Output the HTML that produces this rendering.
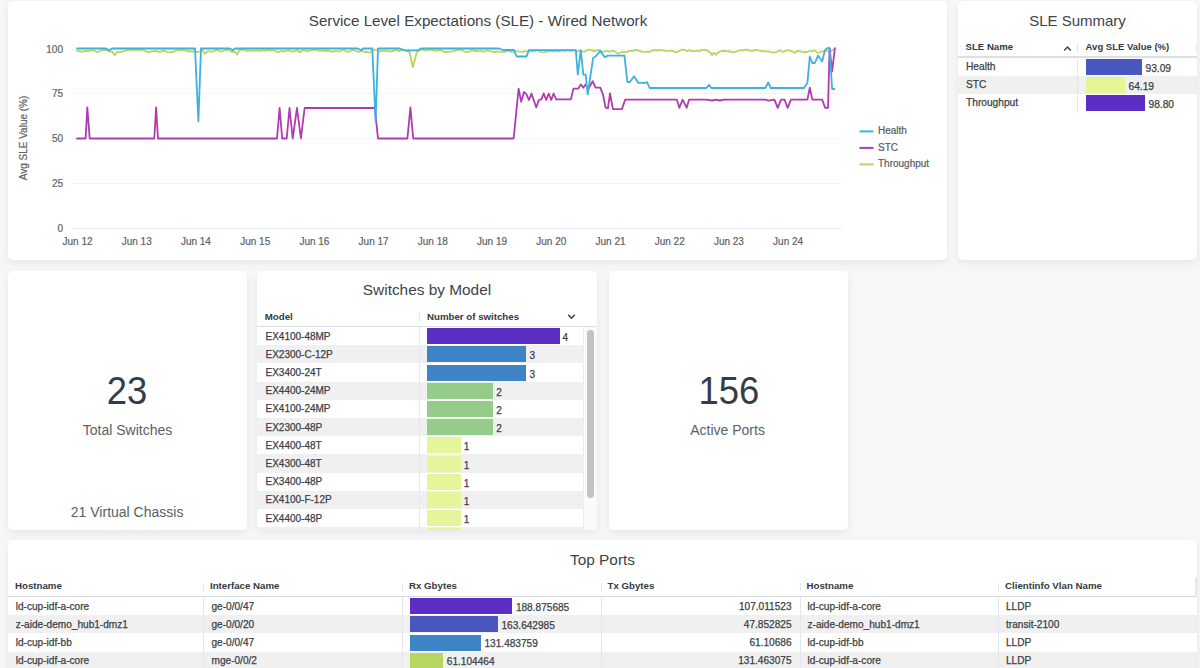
<!DOCTYPE html>
<html><head><meta charset="utf-8"><title>Dashboard</title>
<style>
html,body{margin:0;padding:0;}
body{width:1200px;height:668px;overflow:hidden;background:#f6f7f9;position:relative;font-family:'Liberation Sans', sans-serif;}
.card{position:absolute;background:#fff;border-radius:5px;box-shadow:0 3px 9px rgba(0,0,0,0.07);}
.t{position:absolute;white-space:nowrap;-webkit-text-stroke:0.25px currentColor;}
.r{position:absolute;}
.ic{position:absolute;}
.clip{position:absolute;overflow:hidden;}
.chart{position:absolute;left:0;top:0;}
.ax{font-family:'Liberation Sans', sans-serif;font-size:10px;fill:#5e6268;stroke:#5e6268;stroke-width:0.2px;}
.lg{font-family:'Liberation Sans', sans-serif;font-size:10px;fill:#555b62;stroke:#555b62;stroke-width:0.2px;}
</style></head>
<body>
<div class="card" style="left:8px;top:1px;width:939px;height:259px"></div>
<div class="card" style="left:958px;top:1px;width:239px;height:259px"></div>
<div class="card" style="left:8px;top:271px;width:238.5px;height:259px"></div>
<div class="card" style="left:257px;top:271px;width:340px;height:259px"></div>
<div class="card" style="left:609px;top:271px;width:238.5px;height:259px"></div>
<div class="card" style="left:8px;top:539.5px;width:1189px;height:160.5px"></div>
<div class="t" style="left:178.00px;width:600px;text-align:center;top:12.83px;font-size:15.2px;line-height:15.2px;color:#3d434a;font-weight:400;-webkit-text-stroke:0;">Service Level Expectations (SLE) - Wired Network</div>
<svg class="chart" width="1200" height="268" viewBox="0 0 1200 268">
<line x1="70" y1="49" x2="842" y2="49" stroke="#e9e9eb" stroke-width="1" stroke-dasharray="1,1" shape-rendering="crispEdges"/>
<line x1="70" y1="93.75" x2="842" y2="93.75" stroke="#e9e9eb" stroke-width="1" stroke-dasharray="1,1" shape-rendering="crispEdges"/>
<line x1="70" y1="138.5" x2="842" y2="138.5" stroke="#e9e9eb" stroke-width="1" stroke-dasharray="1,1" shape-rendering="crispEdges"/>
<line x1="70" y1="183.25" x2="842" y2="183.25" stroke="#e9e9eb" stroke-width="1" stroke-dasharray="1,1" shape-rendering="crispEdges"/>
<line x1="70" y1="228" x2="842" y2="228" stroke="#dfe5ef" stroke-width="1" stroke-dasharray="1,1" shape-rendering="crispEdges"/>
<text x="63" y="52.6" text-anchor="end" class="ax">100</text>
<text x="63" y="97.3" text-anchor="end" class="ax">75</text>
<text x="63" y="142.1" text-anchor="end" class="ax">50</text>
<text x="63" y="186.8" text-anchor="end" class="ax">25</text>
<text x="63" y="231.6" text-anchor="end" class="ax">0</text>
<text x="77.5" y="244.7" text-anchor="middle" class="ax">Jun 12</text>
<text x="136.7" y="244.7" text-anchor="middle" class="ax">Jun 13</text>
<text x="195.9" y="244.7" text-anchor="middle" class="ax">Jun 14</text>
<text x="255.2" y="244.7" text-anchor="middle" class="ax">Jun 15</text>
<text x="314.4" y="244.7" text-anchor="middle" class="ax">Jun 16</text>
<text x="373.6" y="244.7" text-anchor="middle" class="ax">Jun 17</text>
<text x="432.8" y="244.7" text-anchor="middle" class="ax">Jun 18</text>
<text x="492.0" y="244.7" text-anchor="middle" class="ax">Jun 19</text>
<text x="551.3" y="244.7" text-anchor="middle" class="ax">Jun 20</text>
<text x="610.5" y="244.7" text-anchor="middle" class="ax">Jun 21</text>
<text x="669.7" y="244.7" text-anchor="middle" class="ax">Jun 22</text>
<text x="728.9" y="244.7" text-anchor="middle" class="ax">Jun 23</text>
<text x="788.1" y="244.7" text-anchor="middle" class="ax">Jun 24</text>
<text transform="translate(27,138) rotate(-90)" text-anchor="middle" class="ax">Avg SLE Value (%)</text>
<g fill="none" stroke-width="1.8" stroke-linejoin="round" stroke-linecap="round">
<path d="M77.0,50.8 L79.5,51.2 L82.0,51.9 L84.5,51.0 L87.0,50.9 L89.5,51.0 L92.0,50.2 L94.5,50.8 L97.5,52.3 L99.5,51.4 L102.0,50.0 L104.5,50.1 L107.0,50.0 L109.5,51.5 L112.0,51.3 L114.7,55.2 L117.0,52.0 L119.5,52.3 L122.0,51.5 L124.5,51.1 L127.0,49.9 L129.5,49.6 L132.0,50.5 L134.5,49.8 L137.0,49.9 L139.5,50.0 L142.0,49.7 L144.5,50.6 L148.5,52.3 L152.0,51.2 L154.5,51.2 L157.0,51.0 L160.0,52.2 L162.0,50.8 L164.5,50.6 L167.0,52.2 L169.5,52.4 L172.0,52.0 L174.5,51.4 L177.0,50.4 L179.5,50.1 L182.0,50.1 L184.5,49.9 L187.0,51.3 L189.5,51.0 L192.0,51.6 L194.5,51.0 L197.0,52.1 L199.5,51.7 L202.0,49.8 L205.0,53.8 L207.0,51.7 L209.5,51.2 L212.0,51.9 L214.5,50.7 L217.0,49.9 L219.5,51.1 L222.0,51.5 L224.5,50.3 L227.0,49.8 L229.5,50.5 L232.0,52.0 L234.5,51.5 L237.0,54.5 L239.5,50.0 L242.0,49.7 L244.5,49.8 L247.0,51.2 L249.5,50.3 L252.0,50.9 L254.5,50.7 L257.0,50.3 L259.5,51.1 L262.0,50.2 L264.5,50.9 L267.0,50.1 L269.5,50.4 L272.0,50.1 L274.5,50.5 L277.0,52.0 L279.5,51.7 L282.0,50.8 L284.5,51.6 L287.0,50.4 L289.5,50.7 L292.0,51.7 L294.5,51.2 L297.0,50.3 L300.0,52.4 L302.0,50.4 L304.5,50.3 L307.0,51.3 L309.5,50.5 L312.0,50.2 L314.5,49.6 L317.0,49.8 L319.5,50.8 L322.0,50.4 L324.5,51.0 L327.0,50.6 L329.5,50.9 L332.0,51.9 L334.5,51.1 L337.0,51.2 L339.5,51.6 L342.0,50.2 L344.5,50.2 L347.0,51.8 L349.5,51.7 L352.0,50.3 L354.5,50.2 L357.0,51.5 L359.5,51.9 L362.0,50.6 L364.5,52.0 L367.0,52.0 L370.0,52.6 L372.0,50.6 L374.5,49.7 L377.0,49.9 L379.5,51.6 L382.0,50.6 L384.5,51.1 L387.0,50.6 L389.5,51.6 L392.0,51.2 L394.5,50.3 L397.0,50.2 L399.5,51.1 L402.0,49.9 L404.5,50.1 L407.0,51.1 L409.5,51.8 L412.8,67.2 L417.0,51.6 L419.5,50.2 L422.0,49.6 L424.5,50.1 L427.0,50.5 L429.5,49.7 L432.0,49.9 L434.5,50.5 L437.0,50.8 L439.5,50.0 L442.0,50.6 L444.5,52.0 L447.0,52.2 L449.5,51.6 L452.0,51.4 L454.5,51.0 L457.0,49.9 L459.5,49.5 L462.0,49.8 L464.5,51.7 L467.0,51.8 L469.5,51.8 L472.0,50.1 L474.5,51.0 L477.0,51.0 L479.5,51.3 L482.0,50.8 L484.5,51.8 L487.0,50.2 L489.5,50.9 L492.0,51.6 L494.5,52.0 L497.0,51.7 L499.5,51.6 L502.0,51.9 L504.5,51.9 L507.0,50.8 L509.5,51.4 L512.0,52.1 L514.5,51.9 L517.0,51.0 L519.5,51.7 L522.0,51.9 L524.5,51.3 L527.0,51.2 L529.5,50.7 L532.0,51.1 L534.5,51.0 L537.0,50.1 L539.5,51.3 L542.0,52.3 L544.5,52.1 L547.0,51.5 L549.5,50.9 L552.0,51.4 L554.5,51.2 L557.0,51.0 L559.5,51.5 L562.0,50.2 L564.5,51.1 L567.0,50.0 L569.5,50.9 L572.0,50.8 L574.5,50.4 L577.0,51.2 L579.5,51.0 L582.0,51.4 L584.5,51.8 L587.0,50.3 L589.5,49.6 L592.0,50.3 L594.5,51.1 L597.0,50.2 L599.5,50.2 L602.0,51.7 L604.5,51.4 L607.0,51.0 L609.5,51.7 L612.0,50.8 L614.5,51.1 L618.0,53.7 L622.0,51.8 L624.5,52.2 L627.0,51.9 L629.5,50.8 L632.0,51.0 L634.5,50.4 L637.0,50.0 L639.5,50.9 L642.0,51.8 L644.5,51.9 L647.0,51.7 L649.5,51.9 L652.0,50.4 L654.5,50.0 L657.0,50.5 L659.5,50.2 L662.0,50.1 L664.5,50.6 L667.0,51.1 L669.5,50.9 L672.0,50.6 L674.5,51.8 L677.0,52.1 L679.5,50.8 L682.0,49.7 L684.5,49.8 L687.0,51.3 L689.5,50.1 L692.0,51.2 L694.5,51.1 L697.0,50.6 L699.5,51.3 L702.0,49.8 L704.5,49.8 L707.0,50.4 L710.0,52.3 L712.0,55.3 L714.0,52.6 L716.0,54.9 L718.5,52.2 L722.0,51.0 L724.5,50.9 L727.0,51.2 L729.5,51.5 L732.0,51.9 L734.5,52.2 L737.0,51.4 L739.5,50.3 L742.0,50.6 L744.5,49.9 L747.0,49.6 L749.5,50.7 L752.0,51.2 L754.5,50.2 L757.0,50.2 L759.5,50.5 L762.0,51.3 L764.5,51.1 L767.0,51.3 L769.5,51.5 L773.0,52.6 L777.0,51.8 L779.5,50.3 L782.0,51.8 L784.5,51.4 L787.0,50.1 L789.5,50.7 L792.0,51.4 L795.0,52.8 L797.0,50.8 L799.5,51.2 L802.0,51.9 L804.5,52.0 L807.0,52.0 L809.5,51.1 L812.0,51.1 L814.5,50.4 L818.0,53.0 L822.0,51.5 L824.5,51.3 L827.0,50.5 L829.5,51.9 L834.0,49.2" stroke="#b6d65f"/>
<path d="M77.0,138.5 L85.6,138.5 L87.3,107.5 L89.7,138.5 L154.3,138.5 L156.1,107.5 L158.0,138.5 L277.0,138.5 L279.6,108.0 L282.2,138.5 L286.7,138.5 L289.5,108.0 L292.7,138.5 L297.0,108.0 L300.9,138.5 L304.6,108.0 L374.8,108.0 L378.0,138.5 L407.4,138.5 L410.4,107.5 L413.2,138.5 L513.6,138.5 L518.6,88.6 L521.2,101.7 L524.0,91.9 L526.5,94.3 L528.9,100.0 L531.4,93.5 L536.3,107.5 L538.8,100.0 L541.3,99.3 L543.7,93.5 L546.2,100.0 L548.7,93.5 L551.2,100.0 L553.6,93.5 L556.1,99.3 L570.9,99.3 L573.4,88.6 L578.3,88.6 L580.8,84.4 L583.3,87.7 L585.7,84.4 L588.2,89.4 L592.6,81.2 L595.6,87.7 L600.2,87.7 L603.0,94.3 L605.5,107.5 L607.9,108.3 L610.0,93.5 L612.9,109.1 L621.9,109.1 L625.2,99.6 L676.8,99.6 L679.3,107.8 L682.6,99.6 L686.7,107.8 L689.1,99.6 L706.4,99.6 L712.0,100.5 L716.0,99.6 L720.0,100.5 L724.0,99.6 L765.4,99.6 L768.7,100.6 L774.4,99.6 L777.7,107.8 L781.0,99.6 L784.5,99.6 L787.6,107.8 L790.9,99.6 L807.4,99.6 L809.8,87.7 L812.3,99.6 L822.2,99.6 L825.1,107.8 L828.0,107.8 L829.6,48.2 L832.1,71.3 L834.9,48.2" stroke="#b03bb0"/>
<path d="M77.0,48.5 L106.0,48.5 L109.0,50.3 L112.0,48.5 L195.0,48.5 L198.4,121.5 L201.0,48.5 L230.0,48.5 L232.7,50.3 L235.0,48.5 L358.0,48.5 L360.8,50.3 L363.0,48.5 L372.3,48.5 L375.6,121.5 L378.0,48.5 L400.0,48.5 L404.0,50.3 L418.0,50.3 L421.0,48.5 L499.0,48.5 L503.0,50.0 L514.0,50.0 L516.6,56.5 L526.5,56.5 L529.0,50.2 L575.8,50.2 L577.8,74.6 L580.8,50.2 L583.3,74.6 L585.7,74.6 L587.7,94.3 L593.1,58.1 L595.6,56.5 L600.2,50.7 L604.7,57.3 L607.9,55.6 L624.4,55.6 L627.4,82.0 L629.9,82.0 L634.0,76.2 L638.1,82.8 L646.3,82.8 L647.0,82.0 L649.6,88.0 L706.4,88.0 L708.9,84.8 L711.4,88.0 L765.4,88.0 L768.2,82.5 L770.8,88.0 L804.1,88.0 L807.4,82.8 L809.8,56.5 L812.3,63.0 L814.8,63.0 L818.1,55.6 L822.2,61.4 L825.1,49.9 L827.1,48.2 L829.6,48.2 L832.1,89.0 L834.5,89.0" stroke="#3fb1e0"/>
</g>
<line x1="859.5" y1="131.4" x2="873.5" y2="131.4" stroke="#3fb1e0" stroke-width="2"/>
<text x="878" y="134.4" class="lg">Health</text>
<line x1="859.5" y1="147.9" x2="873.5" y2="147.9" stroke="#b03bb0" stroke-width="2"/>
<text x="878" y="150.9" class="lg">STC</text>
<line x1="859.5" y1="164.4" x2="873.5" y2="164.4" stroke="#b6d65f" stroke-width="2"/>
<text x="878" y="167.4" class="lg">Throughput</text>
</svg>
<div class="t" style="left:777.50px;width:600px;text-align:center;top:13.30px;font-size:15.0px;line-height:15.0px;color:#3d434a;font-weight:400;-webkit-text-stroke:0;">SLE Summary</div>
<div class="t" style="left:965.60px;top:41.87px;font-size:9.6px;line-height:9.6px;color:#333a40;font-weight:700;-webkit-text-stroke:0;">SLE Name</div>
<svg class="ic" style="left:1063px;top:45px" width="9" height="7"><path d="M1.2,5.5 L4.5,2 L7.8,5.5" fill="none" stroke="#3a3f44" stroke-width="1.5"/></svg>
<div class="r" style="left:1077px;top:43.5px;width:1px;height:8px;background:#e2e4e7;"></div>
<div class="t" style="left:1085.60px;top:41.96px;font-size:9.5px;line-height:9.5px;color:#333a40;font-weight:700;-webkit-text-stroke:0;">Avg SLE Value (%)</div>
<div class="r" style="left:958px;top:56px;width:239px;height:2px;background:#dcdfe3;"></div>
<div class="r" style="left:1196px;top:43.5px;width:1px;height:8px;background:#e2e4e7;"></div>
<div class="t" style="left:966.00px;top:62.27px;font-size:10.2px;line-height:10.2px;color:#3a3f44;font-weight:400;">Health</div>
<div class="r" style="left:1086px;top:58.8px;width:56px;height:16px;background:#4a57bf;"></div>
<div class="t" style="left:1145.50px;top:64.27px;font-size:10.2px;line-height:10.2px;color:#3a3f44;font-weight:400;">93.09</div>
<div class="r" style="left:958px;top:76.0px;width:239px;height:18.0px;background:#f0f0f1;"></div>
<div class="t" style="left:966.00px;top:80.27px;font-size:10.2px;line-height:10.2px;color:#3a3f44;font-weight:400;">STC</div>
<div class="r" style="left:1086px;top:76.8px;width:39px;height:16px;background:#e3f594;"></div>
<div class="t" style="left:1128.50px;top:82.27px;font-size:10.2px;line-height:10.2px;color:#3a3f44;font-weight:400;">64.19</div>
<div class="t" style="left:966.00px;top:98.27px;font-size:10.2px;line-height:10.2px;color:#3a3f44;font-weight:400;">Throughput</div>
<div class="r" style="left:1086px;top:94.8px;width:59px;height:16px;background:#5b2fc4;"></div>
<div class="t" style="left:1148.50px;top:100.27px;font-size:10.2px;line-height:10.2px;color:#3a3f44;font-weight:400;">98.80</div>
<div class="r" style="left:1077px;top:58px;width:1px;height:53.7px;background:#e4e6e9;"></div>
<div class="t" style="left:-172.70px;width:600px;text-align:center;top:370.88px;font-size:39.6px;line-height:39.6px;color:#343d46;font-weight:400;-webkit-text-stroke:0;transform:scaleX(0.92);transform-origin:center">23</div>
<div class="t" style="left:-172.50px;width:600px;text-align:center;top:422.75px;font-size:14.0px;line-height:14.0px;color:#5a6068;font-weight:400;-webkit-text-stroke:0;">Total Switches</div>
<div class="t" style="left:-172.90px;width:600px;text-align:center;top:505.15px;font-size:14.0px;line-height:14.0px;color:#5a6068;font-weight:400;-webkit-text-stroke:0;">21 Virtual Chassis</div>
<div class="t" style="left:428.80px;width:600px;text-align:center;top:370.88px;font-size:39.6px;line-height:39.6px;color:#343d46;font-weight:400;-webkit-text-stroke:0;transform:scaleX(0.92);transform-origin:center">156</div>
<div class="t" style="left:427.60px;width:600px;text-align:center;top:422.75px;font-size:14.0px;line-height:14.0px;color:#5a6068;font-weight:400;-webkit-text-stroke:0;">Active Ports</div>
<div class="t" style="left:127.00px;width:600px;text-align:center;top:282.26px;font-size:15.4px;line-height:15.4px;color:#3d434a;font-weight:400;-webkit-text-stroke:0;">Switches by Model</div>
<div class="t" style="left:264.80px;top:311.59px;font-size:9.7px;line-height:9.7px;color:#333a40;font-weight:700;-webkit-text-stroke:0;">Model</div>
<div class="r" style="left:418.5px;top:313px;width:1px;height:8px;background:#e2e4e7;"></div>
<div class="t" style="left:427.00px;top:311.59px;font-size:9.7px;line-height:9.7px;color:#333a40;font-weight:700;-webkit-text-stroke:0;">Number of switches</div>
<svg class="ic" style="left:567px;top:313px" width="9" height="7"><path d="M1.2,1.8 L4.5,5.2 L7.8,1.8" fill="none" stroke="#3a3f44" stroke-width="1.5"/></svg>
<div class="r" style="left:257px;top:325.5px;width:340px;height:1.5px;background:#dcdfe3;"></div>
<div class="clip" style="left:257px;top:327px;width:340px;height:203px">
<div class="t" style="left:8.5px;top:4.63px;font-size:10px;line-height:10px;color:#3a3f44">EX4100-48MP</div>
<div class="r" style="left:170px;top:1.20px;width:132.6px;height:16px;background:#5b2fc4"></div>
<div class="t" style="left:305.6px;top:6.13px;font-size:10px;line-height:10px;color:#3a3f44">4</div>
<div class="r" style="left:0;top:18.20px;width:326px;height:18.2px;background:#f0f0f1"></div>
<div class="t" style="left:8.5px;top:22.83px;font-size:10px;line-height:10px;color:#3a3f44">EX2300-C-12P</div>
<div class="r" style="left:170px;top:19.40px;width:99.4px;height:16px;background:#3e84c6"></div>
<div class="t" style="left:272.4px;top:24.33px;font-size:10px;line-height:10px;color:#3a3f44">3</div>
<div class="t" style="left:8.5px;top:41.03px;font-size:10px;line-height:10px;color:#3a3f44">EX3400-24T</div>
<div class="r" style="left:170px;top:37.60px;width:99.4px;height:16px;background:#3e84c6"></div>
<div class="t" style="left:272.4px;top:42.53px;font-size:10px;line-height:10px;color:#3a3f44">3</div>
<div class="r" style="left:0;top:54.60px;width:326px;height:18.2px;background:#f0f0f1"></div>
<div class="t" style="left:8.5px;top:59.23px;font-size:10px;line-height:10px;color:#3a3f44">EX4400-24MP</div>
<div class="r" style="left:170px;top:55.80px;width:66.3px;height:16px;background:#94cd89"></div>
<div class="t" style="left:239.3px;top:60.73px;font-size:10px;line-height:10px;color:#3a3f44">2</div>
<div class="t" style="left:8.5px;top:77.43px;font-size:10px;line-height:10px;color:#3a3f44">EX4100-24MP</div>
<div class="r" style="left:170px;top:74.00px;width:66.3px;height:16px;background:#94cd89"></div>
<div class="t" style="left:239.3px;top:78.93px;font-size:10px;line-height:10px;color:#3a3f44">2</div>
<div class="r" style="left:0;top:91.00px;width:326px;height:18.2px;background:#f0f0f1"></div>
<div class="t" style="left:8.5px;top:95.63px;font-size:10px;line-height:10px;color:#3a3f44">EX2300-48P</div>
<div class="r" style="left:170px;top:92.20px;width:66.3px;height:16px;background:#94cd89"></div>
<div class="t" style="left:239.3px;top:97.13px;font-size:10px;line-height:10px;color:#3a3f44">2</div>
<div class="t" style="left:8.5px;top:113.83px;font-size:10px;line-height:10px;color:#3a3f44">EX4400-48T</div>
<div class="r" style="left:170px;top:110.40px;width:33.8px;height:16px;background:#e3f69a"></div>
<div class="t" style="left:206.8px;top:115.33px;font-size:10px;line-height:10px;color:#3a3f44">1</div>
<div class="r" style="left:0;top:127.40px;width:326px;height:18.2px;background:#f0f0f1"></div>
<div class="t" style="left:8.5px;top:132.03px;font-size:10px;line-height:10px;color:#3a3f44">EX4300-48T</div>
<div class="r" style="left:170px;top:128.60px;width:33.8px;height:16px;background:#e3f69a"></div>
<div class="t" style="left:206.8px;top:133.53px;font-size:10px;line-height:10px;color:#3a3f44">1</div>
<div class="t" style="left:8.5px;top:150.23px;font-size:10px;line-height:10px;color:#3a3f44">EX3400-48P</div>
<div class="r" style="left:170px;top:146.80px;width:33.8px;height:16px;background:#e3f69a"></div>
<div class="t" style="left:206.8px;top:151.73px;font-size:10px;line-height:10px;color:#3a3f44">1</div>
<div class="r" style="left:0;top:163.80px;width:326px;height:18.2px;background:#f0f0f1"></div>
<div class="t" style="left:8.5px;top:168.43px;font-size:10px;line-height:10px;color:#3a3f44">EX4100-F-12P</div>
<div class="r" style="left:170px;top:165.00px;width:33.8px;height:16px;background:#e3f69a"></div>
<div class="t" style="left:206.8px;top:169.93px;font-size:10px;line-height:10px;color:#3a3f44">1</div>
<div class="t" style="left:8.5px;top:186.63px;font-size:10px;line-height:10px;color:#3a3f44">EX4400-48P</div>
<div class="r" style="left:170px;top:183.20px;width:33.8px;height:16px;background:#e3f69a"></div>
<div class="t" style="left:206.8px;top:188.13px;font-size:10px;line-height:10px;color:#3a3f44">1</div>
<div class="r" style="left:0;top:200.20px;width:326px;height:18.2px;background:#f0f0f1"></div>
<div class="t" style="left:8.5px;top:204.83px;font-size:10px;line-height:10px;color:#3a3f44">EX4100-48P</div>
<div class="r" style="left:170px;top:201.40px;width:33.8px;height:16px;background:#e3f69a"></div>
<div class="t" style="left:206.8px;top:206.33px;font-size:10px;line-height:10px;color:#3a3f44">1</div>
<div class="r" style="left:161.5px;top:0;width:1px;height:203px;background:#e6e8ea"></div>
<div class="r" style="left:326px;top:0;width:13px;height:203px;background:#fafafa;border-left:1px solid #ececec"></div>
<div class="r" style="left:330px;top:3px;width:7px;height:168px;background:#c2c2c2;border-radius:4px"></div>
</div>
<div class="t" style="left:302.50px;width:600px;text-align:center;top:551.96px;font-size:15.4px;line-height:15.4px;color:#3d434a;font-weight:400;-webkit-text-stroke:0;">Top Ports</div>
<div class="t" style="left:15.00px;top:581.39px;font-size:9.7px;line-height:9.7px;color:#333a40;font-weight:700;-webkit-text-stroke:0;">Hostname</div>
<div class="t" style="left:210.00px;top:581.39px;font-size:9.7px;line-height:9.7px;color:#333a40;font-weight:700;-webkit-text-stroke:0;">Interface Name</div>
<div class="r" style="left:203px;top:582.5px;width:1px;height:8px;background:#e2e4e7;"></div>
<div class="t" style="left:409.00px;top:581.39px;font-size:9.7px;line-height:9.7px;color:#333a40;font-weight:700;-webkit-text-stroke:0;">Rx Gbytes</div>
<div class="r" style="left:402px;top:582.5px;width:1px;height:8px;background:#e2e4e7;"></div>
<div class="t" style="left:607.50px;top:581.39px;font-size:9.7px;line-height:9.7px;color:#333a40;font-weight:700;-webkit-text-stroke:0;">Tx Gbytes</div>
<div class="r" style="left:600.5px;top:582.5px;width:1px;height:8px;background:#e2e4e7;"></div>
<div class="t" style="left:806.50px;top:581.39px;font-size:9.7px;line-height:9.7px;color:#333a40;font-weight:700;-webkit-text-stroke:0;">Hostname</div>
<div class="r" style="left:799.5px;top:582.5px;width:1px;height:8px;background:#e2e4e7;"></div>
<div class="t" style="left:1005.00px;top:581.39px;font-size:9.7px;line-height:9.7px;color:#333a40;font-weight:700;-webkit-text-stroke:0;">Clientinfo Vlan Name</div>
<div class="r" style="left:998px;top:582.5px;width:1px;height:8px;background:#e2e4e7;"></div>
<div class="r" style="left:8px;top:595.5px;width:1189px;height:1.5px;background:#d7dadf;"></div>
<div class="r" style="left:1195px;top:577px;width:2px;height:19px;background:#e8e8e8;"></div>
<div class="t" style="left:15.70px;top:601.75px;font-size:10.1px;line-height:10.1px;color:#3a3f44;font-weight:400;">ld-cup-idf-a-core</div>
<div class="t" style="left:211.50px;top:601.75px;font-size:10.1px;line-height:10.1px;color:#3a3f44;font-weight:400;">ge-0/0/47</div>
<div class="r" style="left:410px;top:598.2px;width:102.4px;height:16px;background:#5b2fc4;"></div>
<div class="t" style="left:515.90px;top:602.75px;font-size:10.1px;line-height:10.1px;color:#3a3f44;font-weight:400;">188.875685</div>
<div class="t" style="left:191.50px;width:600px;text-align:right;top:601.75px;font-size:10.1px;line-height:10.1px;color:#3a3f44;font-weight:400;">107.011523</div>
<div class="t" style="left:807.50px;top:601.75px;font-size:10.1px;line-height:10.1px;color:#3a3f44;font-weight:400;">ld-cup-idf-a-core</div>
<div class="t" style="left:1006.00px;top:601.75px;font-size:10.1px;line-height:10.1px;color:#3a3f44;font-weight:400;">LLDP</div>
<div class="r" style="left:8px;top:615.2px;width:1189px;height:18.2px;background:#f0f0f1;"></div>
<div class="t" style="left:15.70px;top:619.95px;font-size:10.1px;line-height:10.1px;color:#3a3f44;font-weight:400;">z-aide-demo_hub1-dmz1</div>
<div class="t" style="left:211.50px;top:619.95px;font-size:10.1px;line-height:10.1px;color:#3a3f44;font-weight:400;">ge-0/0/20</div>
<div class="r" style="left:410px;top:616.4000000000001px;width:88px;height:16px;background:#4a57bf;"></div>
<div class="t" style="left:501.50px;top:620.95px;font-size:10.1px;line-height:10.1px;color:#3a3f44;font-weight:400;">163.642985</div>
<div class="t" style="left:191.50px;width:600px;text-align:right;top:619.95px;font-size:10.1px;line-height:10.1px;color:#3a3f44;font-weight:400;">47.852825</div>
<div class="t" style="left:807.50px;top:619.95px;font-size:10.1px;line-height:10.1px;color:#3a3f44;font-weight:400;">z-aide-demo_hub1-dmz1</div>
<div class="t" style="left:1006.00px;top:619.95px;font-size:10.1px;line-height:10.1px;color:#3a3f44;font-weight:400;">transit-2100</div>
<div class="t" style="left:15.70px;top:638.15px;font-size:10.1px;line-height:10.1px;color:#3a3f44;font-weight:400;">ld-cup-idf-bb</div>
<div class="t" style="left:211.50px;top:638.15px;font-size:10.1px;line-height:10.1px;color:#3a3f44;font-weight:400;">ge-0/0/47</div>
<div class="r" style="left:410px;top:634.6px;width:71px;height:16px;background:#3e84c6;"></div>
<div class="t" style="left:484.50px;top:639.15px;font-size:10.1px;line-height:10.1px;color:#3a3f44;font-weight:400;">131.483759</div>
<div class="t" style="left:191.50px;width:600px;text-align:right;top:638.15px;font-size:10.1px;line-height:10.1px;color:#3a3f44;font-weight:400;">61.10686</div>
<div class="t" style="left:807.50px;top:638.15px;font-size:10.1px;line-height:10.1px;color:#3a3f44;font-weight:400;">ld-cup-idf-bb</div>
<div class="t" style="left:1006.00px;top:638.15px;font-size:10.1px;line-height:10.1px;color:#3a3f44;font-weight:400;">LLDP</div>
<div class="r" style="left:8px;top:651.6px;width:1189px;height:18.2px;background:#f0f0f1;"></div>
<div class="t" style="left:15.70px;top:656.35px;font-size:10.1px;line-height:10.1px;color:#3a3f44;font-weight:400;">ld-cup-idf-a-core</div>
<div class="t" style="left:211.50px;top:656.35px;font-size:10.1px;line-height:10.1px;color:#3a3f44;font-weight:400;">mge-0/0/2</div>
<div class="r" style="left:410px;top:652.8000000000001px;width:33.3px;height:16px;background:#b6d65f;"></div>
<div class="t" style="left:446.80px;top:657.35px;font-size:10.1px;line-height:10.1px;color:#3a3f44;font-weight:400;">61.104464</div>
<div class="t" style="left:191.50px;width:600px;text-align:right;top:656.35px;font-size:10.1px;line-height:10.1px;color:#3a3f44;font-weight:400;">131.463075</div>
<div class="t" style="left:807.50px;top:656.35px;font-size:10.1px;line-height:10.1px;color:#3a3f44;font-weight:400;">ld-cup-idf-a-core</div>
<div class="t" style="left:1006.00px;top:656.35px;font-size:10.1px;line-height:10.1px;color:#3a3f44;font-weight:400;">LLDP</div>
<div class="r" style="left:203px;top:597px;width:1px;height:80px;background:#e4e6e9;"></div>
<div class="r" style="left:402px;top:597px;width:1px;height:80px;background:#e4e6e9;"></div>
<div class="r" style="left:600.5px;top:597px;width:1px;height:80px;background:#e4e6e9;"></div>
<div class="r" style="left:799.5px;top:597px;width:1px;height:80px;background:#e4e6e9;"></div>
<div class="r" style="left:998px;top:597px;width:1px;height:80px;background:#e4e6e9;"></div>
</body></html>
